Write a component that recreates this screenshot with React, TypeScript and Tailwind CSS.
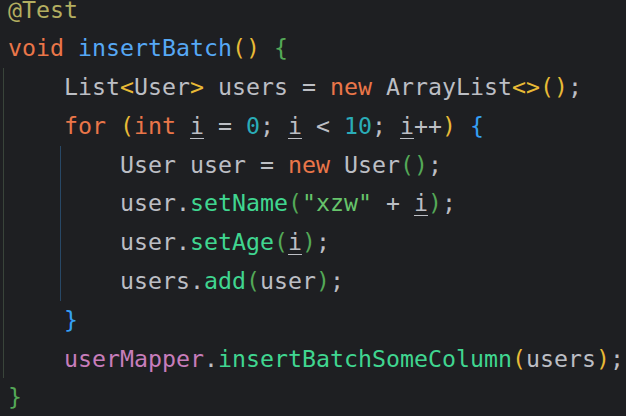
import React from 'react'

const c = {
  text: 'text-[#bcbec4]',
  kw: 'text-[#ea7649]',
  ann: 'text-[#b3ae60]',
  decl: 'text-[#56a8f5]',
  call: 'text-[#40d690]',
  str: 'text-[#67c46b]',
  num: 'text-[#2aacb8]',
  field: 'text-[#c77dbb]',
  y: 'text-[#e8ba36]',
  g: 'text-[#54a857]',
  b: 'text-[#359ff4]',
}

function T({ k, children }: { k: keyof typeof c; children: React.ReactNode }) {
  return <span className={c[k]}>{children}</span>
}

// local variable, underlined like the IDE does for reassigned vars
function U({ children }: { children: React.ReactNode }) {
  return <span className="underline decoration-1 underline-offset-[4px] decoration-[#bcbec4]">{children}</span>
}

function Line({ pad, children }: { pad: string; children: React.ReactNode }) {
  return <div className={`h-[38.8px] leading-[38.8px] whitespace-pre ${pad}`}>{children}</div>
}

export default function App() {
  return (
    <div
      className="w-[626px] h-[416px] overflow-hidden bg-[#1e1f22] text-[#bcbec4] text-[23.25px]"
      style={{ fontFamily: '"DejaVu Sans Mono", "Liberation Mono", monospace' }}
    >
      <div className="-mt-[9.5px]">
        <Line pad="pl-[8px]">
          <T k="ann">@Test</T>
        </Line>
        <Line pad="pl-[8px]">
          <T k="kw">void</T> <T k="decl">insertBatch</T>
          <T k="y">()</T> <T k="g">{'{'}</T>
        </Line>

        {/* method body */}
        <div className="ml-[3px] border-l border-[#39443a]">
          <Line pad="pl-[60px]">
            List<T k="y">&lt;</T>User<T k="y">&gt;</T> users = <T k="kw">new</T> ArrayList<T k="y">&lt;&gt;()</T>;
          </Line>
          <Line pad="pl-[60px]">
            <T k="kw">for</T> <T k="y">(</T><T k="kw">int</T> <U>i</U> = <T k="num">0</T>; <U>i</U> &lt;{' '}
            <T k="num">10</T>; <U>i</U>++<T k="y">)</T> <T k="b">{'{'}</T>
          </Line>

          {/* loop body */}
          <div className="ml-[56px] border-l border-[#284866]">
            <Line pad="pl-[59px]">
              User user = <T k="kw">new</T> User<T k="g">()</T>;
            </Line>
            <Line pad="pl-[59px]">
              user.<T k="call">setName</T><T k="g">(</T><T k="str">"xzw"</T> + <U>i</U><T k="g">)</T>;
            </Line>
            <Line pad="pl-[59px]">
              user.<T k="call">setAge</T><T k="g">(</T><U>i</U><T k="g">)</T>;
            </Line>
            <Line pad="pl-[59px]">
              users.<T k="call">add</T><T k="g">(</T>user<T k="g">)</T>;
            </Line>
          </div>

          <Line pad="pl-[60px]">
            <T k="b">{'}'}</T>
          </Line>
          <Line pad="pl-[60px]">
            <T k="field">userMapper</T>.<T k="call">insertBatchSomeColumn</T><T k="y">(</T>users<T k="y">)</T>;
          </Line>
        </div>

        <Line pad="pl-[8px]">
          <T k="g">{'}'}</T>
        </Line>
      </div>
    </div>
  )
}
